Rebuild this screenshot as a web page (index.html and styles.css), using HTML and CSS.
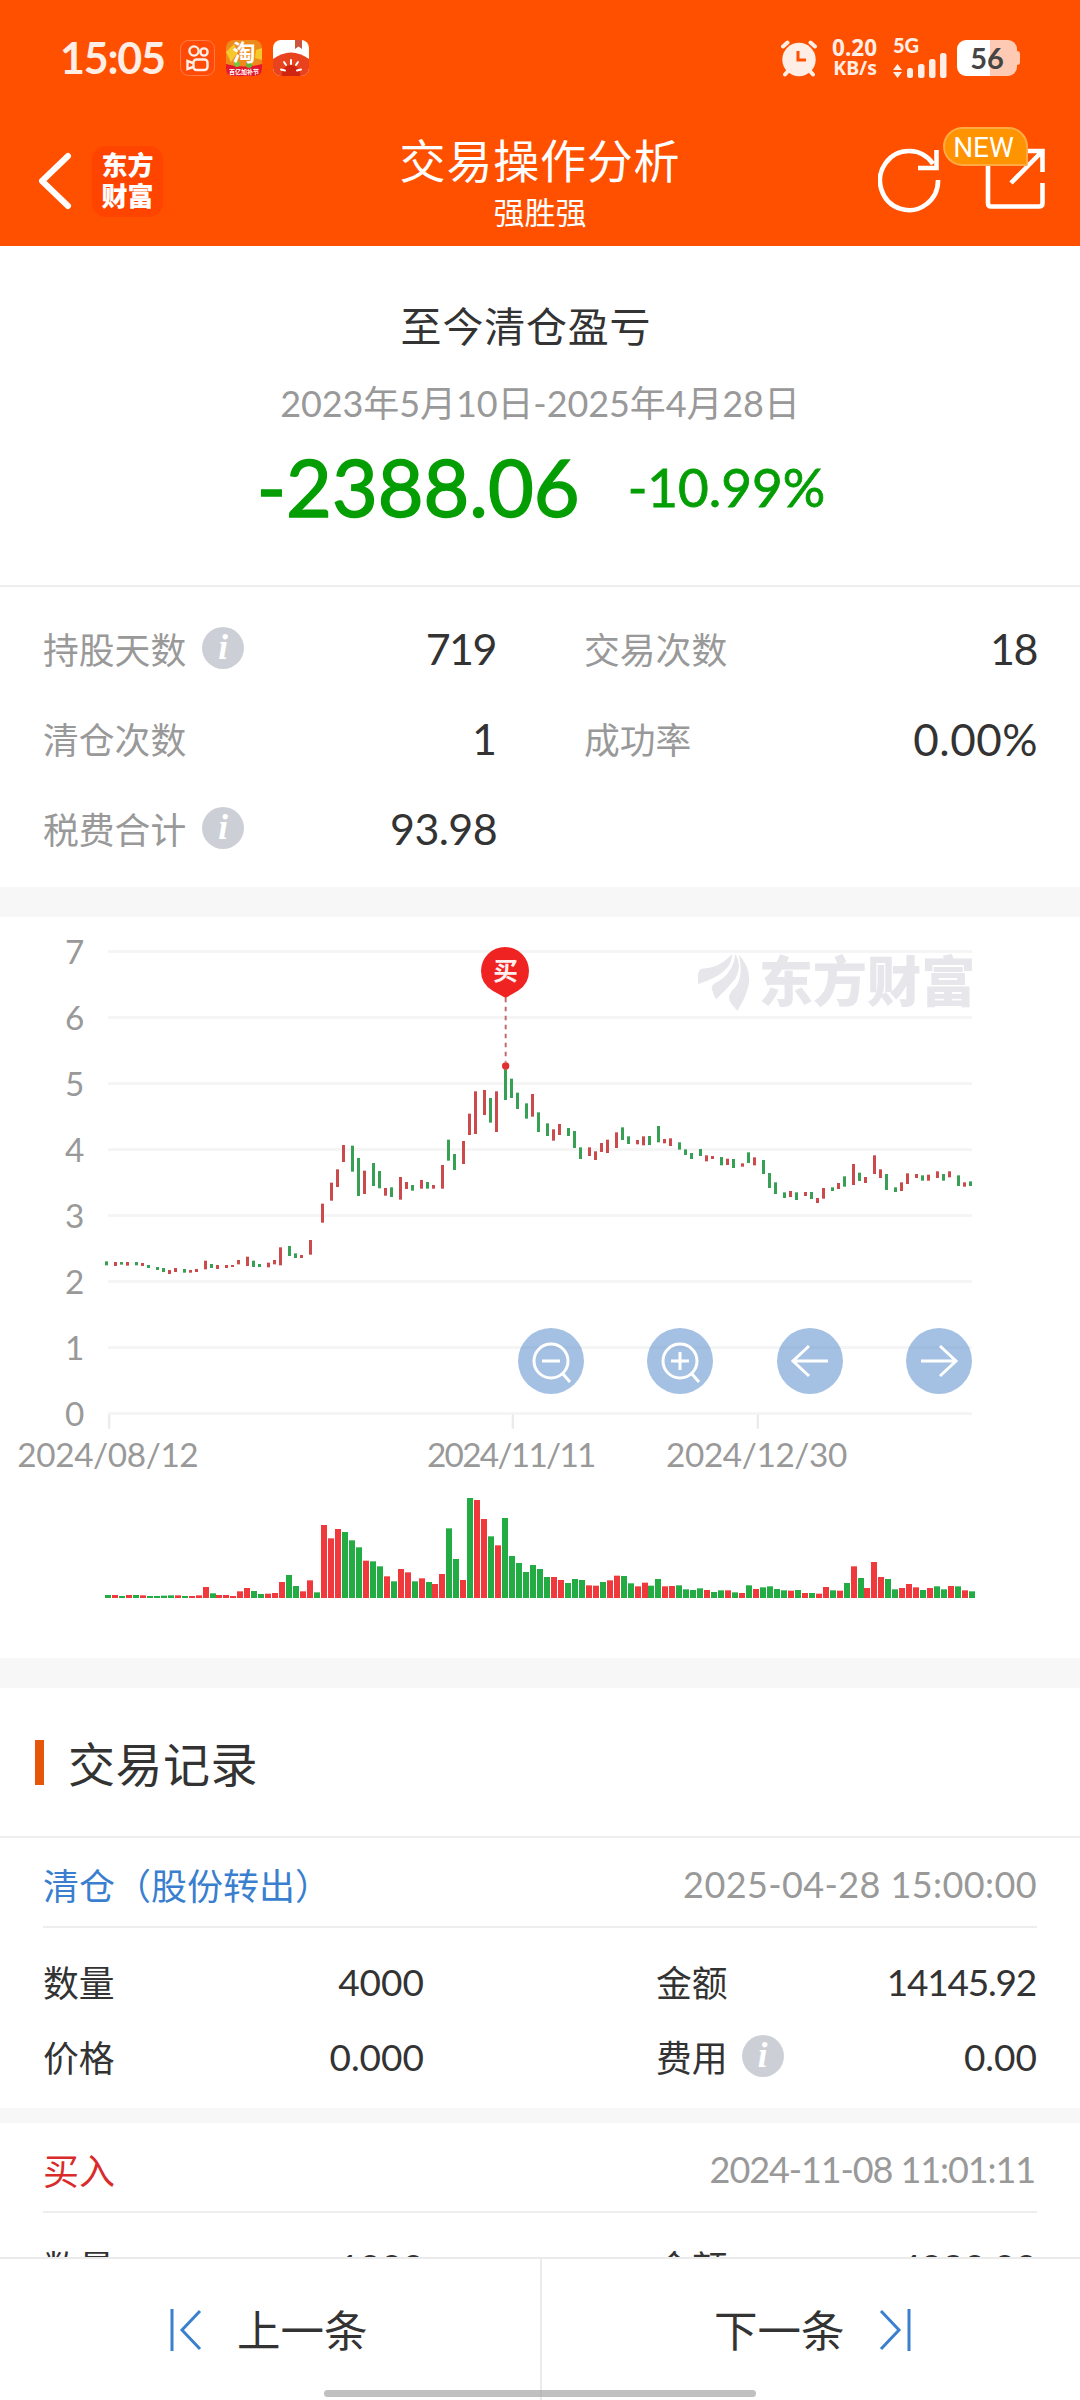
FILE: index.html
```html
<!DOCTYPE html>
<html lang="zh-CN">
<head>
    <meta charset="UTF-8">
    <title>交易操作分析</title>
    <link rel="stylesheet" href="styles.css">
</head>
<body>
    <header>
        <div class="status-bar">
            <span class="clock">15:05</span>
            <div class="app-icons">
                <svg width="35" height="36" viewBox="0 0 35 36">
                    <rect x="0.5" y="0.5" width="34" height="35" rx="8" fill="#ff4a08" stroke="#ff7a45"/>
                    <g fill="none" stroke="#ffeee6" stroke-width="2.4">
                        <circle cx="14" cy="11" r="4.6"/>
                        <circle cx="24" cy="12" r="3.6"/>
                        <rect x="13.5" y="19.5" width="14" height="10.5" rx="3"/>
                        <path d="M13 23 L7.5 21 V29 L13 27"/>
                    </g>
                </svg>
                <svg width="36" height="36" viewBox="0 0 36 36">
                    <rect width="36" height="36" rx="8" fill="#ee8a1c"/>
                    <path d="M0 12 L8 4 L12 12 L5 22 Z M30 10 L36 8 V20 L29 18 Z" fill="#f5c92b"/>
                    <path d="M0 24 Q18 29 36 24 V28 Q36 36 28 36 H8 Q0 36 0 28 Z" fill="#e4162b"/>
                    <circle cx="11" cy="24" r="3" fill="#7cc242"/>
                    <circle cx="23" cy="25" r="3" fill="#6ab53a"/>
                    <text x="18" y="21" class="tao">淘</text>
                    <text x="18" y="34" class="tao-sub">百亿加补节</text>
                </svg>
                <svg width="36" height="36" viewBox="0 0 36 36">
                    <clipPath id="tomatoClip"><rect width="36" height="36" rx="8"/></clipPath>
                    <g clip-path="url(#tomatoClip)">
                        <rect width="36" height="36" fill="#fff"/>
                        <path d="M0 19 Q18 6 36 19 V36 H0 Z" fill="#e8421f"/>
                        <circle cx="18" cy="34" r="9" fill="#cf2410"/>
                        <path d="M22 0 H29 V9 L25.5 6.5 L22 9 Z" fill="#c9563c"/>
                        <path d="M18 20 V24 M11 22 L13 25 M25 22 L23 25 M8 29.5 L12 30.5 M28 29.5 L24 30.5" stroke="#fff" stroke-width="2" stroke-linecap="round"/>
                    </g>
                </svg>
            </div>
            <div class="status-right">
                <svg class="alarm" width="38" height="38" viewBox="0 0 38 38">
                    <g stroke="#ffeee6" stroke-width="4" stroke-linecap="round" fill="none">
                        <path d="M3 7.5 L7.5 3.5 M35 7.5 L30.5 3.5 M9 31 L5 35.5 M29 31 L33 35.5"/>
                    </g>
                    <circle cx="19" cy="20.5" r="16.7" fill="#ffeee6"/>
                    <path d="M18 12 V21 H26" stroke="#ff5000" stroke-width="3" fill="none"/>
                </svg>
                <div class="net-speed"><span>0.20</span><span>KB/s</span></div>
                <div class="signal">
                    <span>5G</span>
                    <svg width="55" height="26" viewBox="0 0 55 26" fill="#ffeee6">
                        <path d="M0 18 L4.5 12 L9 18 Z M0 20 L4.5 26 L9 20 Z"/>
                        <rect x="14" y="16" width="6" height="10" rx="2.5"/>
                        <rect x="25" y="12" width="6.5" height="14" rx="2.5"/>
                        <rect x="36" y="7" width="6.5" height="19" rx="2.5"/>
                        <rect x="47" y="1" width="6.5" height="25" rx="2.5"/>
                    </svg>
                </div>
                <div class="battery">56</div>
            </div>
        </div>
        <div class="title-bar">
            <div class="title-left">
                <svg width="36" height="60" viewBox="0 0 36 60">
                    <path d="M31 5 L5 30 L31 55" fill="none" stroke="#fff" stroke-width="6" stroke-linecap="round" stroke-linejoin="round"/>
                </svg>
                <div class="brand"><span>东方</span><span>财富</span></div>
            </div>
            <div class="title-text">
                <h1>交易操作分析</h1>
                <p>强胜强</p>
            </div>
            <div class="title-right">
                <svg width="64" height="68" viewBox="0 0 64 68" fill="none" stroke="#fff" stroke-width="4.6">
                    <path d="M60 33 A29 29.500 0 1 1 55 17"/>
                    <path d="M58.500 3 V21 H40"/>
                </svg>
                <svg width="62" height="64" viewBox="0 0 62 64" fill="none" stroke="#fff" stroke-width="4.6">
                    <path d="M4 14 V56 Q4 59.500 7 59.500 H55 Q58.500 59.500 58.500 56 V36"/>
                    <path d="M42 4 H58.500 V25 M58.500 4 L27 36"/>
                </svg>
                <span class="new-badge">NEW</span>
            </div>
        </div>
    </header>

    <main>
        <section class="summary">
            <h2>至今清仓盈亏</h2>
            <p class="period">2023年5月10日-2025年4月28日</p>
            <div class="profit">
                <span class="amount">-2388.06</span>
                <span class="percent">-10.99%</span>
            </div>
        </section>

        <section class="stats">
            <div class="stat"><label>持股天数</label><i class="info">i</i><b class="tight">719</b></div>
            <div class="stat"><label>交易次数</label><b class="tight">18</b></div>
            <div class="stat"><label>清仓次数</label><b>1</b></div>
            <div class="stat"><label>成功率</label><b class="wide">0.00%</b></div>
            <div class="stat"><label>税费合计</label><i class="info">i</i><b class="decimal">93.98</b></div>
        </section>

        <section class="chart">
            <svg id="chart" width="1080" height="741" viewBox="0 21 3240 2223">
                <g id="grid"></g>
                <g fill="#e6e6eb">
                    <path d="M2094 222 V200 Q2094 178 2106 176 Q2160 174 2196 132 Q2198 190 2094 222 Z"/>
                    <path d="M2148 268 Q2140 255 2135 235 Q2136 224 2146 219 Q2200 192 2206 132 Q2228 168 2206 206 Q2178 240 2148 268 Z"/>
                    <path d="M2212 302 Q2186 276 2187 262 Q2188 248 2206 232 Q2232 196 2216 134 Q2248 166 2248 212 Q2242 256 2212 302 Z"/>
                    <text x="2276" y="276" class="watermark" textLength="650" lengthAdjust="spacingAndGlyphs">东方财富</text>
                </g>
                <g id="candles"></g>
                <g id="volumes"></g>
                <path d="M1517 263 V455" stroke="#c46a6a" stroke-width="6" stroke-dasharray="14 13"/>
                <circle cx="1517" cy="468" r="11" fill="#e0302f"/>
                <path d="M1517 264 L1478 242 Q1443 222 1443 183 A72 72 0 0 1 1587 183 Q1587 222 1554 242 Z" fill="#f02323"/>
                <text x="1517" y="210" class="pin-text">买</text>
            </svg>
            <div class="chart-tools">
                <button><svg viewBox="0 0 66 66"><circle cx="33" cy="33" r="17"/><path d="M24 33 H42 M45 46 L52 54"/></svg></button>
                <button><svg viewBox="0 0 66 66"><circle cx="33" cy="33" r="17"/><path d="M24 33 H42 M33 24 V42 M45 46 L52 54"/></svg></button>
                <button><svg viewBox="0 0 66 66"><path d="M51 33 H16 M32 18 L16 33 L32 48"/></svg></button>
                <button><svg viewBox="0 0 66 66"><path d="M15 33 H50 M34 18 L50 33 L34 48"/></svg></button>
            </div>
        </section>

        <section class="records">
            <h3>交易记录</h3>
            <div class="record">
                <div class="record-head"><span class="sell">清仓（股份转出）</span><time>2025-04-28 15:00:00</time></div>
                <div class="record-body">
                    <div class="cell"><label>数量</label><b>4000</b></div>
                    <div class="cell"><label>金额</label><b class="tight">14145.92</b></div>
                    <div class="cell"><label>价格</label><b>0.000</b></div>
                    <div class="cell"><label>费用</label><i class="info">i</i><b>0.00</b></div>
                </div>
            </div>
            <div class="record">
                <div class="record-head"><span class="buy">买入</span><time class="time-narrow">2024-11-08 11:01:11</time></div>
                <div class="record-body">
                    <div class="cell"><label>数量</label><b>1000</b></div>
                    <div class="cell"><label>金额</label><b>4980.00</b></div>
                </div>
            </div>
        </section>
    </main>

    <footer>
        <a class="prev">
            <svg width="32" height="44" viewBox="0 0 32 44"><path d="M2 1 V43 M30 3 L12 22 L30 41"/></svg>
            <span>上一条</span>
        </a>
        <a class="next">
            <span>下一条</span>
            <svg width="32" height="44" viewBox="0 0 32 44"><path d="M30 1 V43 M2 3 L20 22 L2 41"/></svg>
        </a>
        <div class="home-indicator"></div>
    </footer>

    <script src="chart.js"></script>
</body>
</html>
```
FILE: styles.css
```css
* {
    box-sizing: border-box;
    margin: 0;
    padding: 0;
}
body {
    width: 1080px;
    height: 2400px;
    overflow: hidden;
    display: flex;
    flex-direction: column;
    background: #fff;
    color: #333;
    font-family: Lato, "Noto Sans CJK SC", sans-serif;
}
svg {
    display: block;
    flex: none;
}
header {
    flex: none;
    height: 246px;
    background: #ff5000;
    color: #fff;
}

/* status bar */
.status-bar {
    height: 116px;
    padding: 0 60px;
    display: flex;
    align-items: center;
    color: #ffeee6;
}
.clock {
    width: 120px;
    padding-bottom: 2px;
    font-size: 43px;
    font-weight: 700;
    letter-spacing: -1.2px;
}
.app-icons {
    display: flex;
    gap: 11px;
}
.app-icons svg {
    overflow: visible;
}
.tao {
    font-size: 23px;
    font-weight: 700;
    fill: #fff;
    text-anchor: middle;
}
.tao-sub {
    font-size: 6px;
    font-weight: 700;
    fill: #fff;
    text-anchor: middle;
}
.status-right {
    margin-left: auto;
    display: flex;
    align-items: center;
}
.alarm {
    margin-right: 11px;
}
.net-speed {
    width: 48px;
    margin-right: 16px;
    padding-bottom: 1px;
    font-family: "Noto Sans", sans-serif;
    font-size: 19.5px;
    font-weight: 700;
    line-height: 20px;
    text-align: right;
    white-space: nowrap;
}
.net-speed span {
    display: block;
}
.net-speed span:first-child {
    font-size: 22.5px;
}
.signal {
    width: 64px;
    font-size: 20px;
    font-weight: 900;
    line-height: 13px;
}
.signal span {
    display: block;
    padding-top: 1px;
}
.battery {
    position: relative;
    width: 60px;
    height: 36px;
    margin-right: 3px;
    border-radius: 9px;
    background: linear-gradient(90deg, #fff 33px, #ffcab3 33px);
    color: #444;
    font-size: 29px;
    font-weight: 700;
    line-height: 36px;
    text-align: center;
}
.battery::after {
    content: "";
    position: absolute;
    right: -3px;
    top: 11px;
    width: 3px;
    height: 14px;
    border-radius: 0 3px 3px 0;
    background: #ffcab3;
}

/* title bar */
.title-bar {
    height: 130px;
    display: grid;
    grid-template-columns: 1fr 400px 1fr;
}
.title-left {
    display: flex;
    align-items: center;
    padding-left: 37px;
    gap: 19px;
}
.brand {
    width: 71px;
    height: 71px;
    padding-top: 4px;
    border-radius: 14px;
    background: #ff4400;
    font-size: 26px;
    font-weight: 900;
    line-height: 31px;
    text-align: center;
}
.brand span {
    display: block;
}
.title-text {
    text-align: center;
    padding-top: 17px;
}
.title-text h1 {
    font-size: 46px;
    font-weight: 400;
    line-height: 56px;
    letter-spacing: 0.8px;
}
.title-text p {
    font-size: 31px;
    line-height: 46px;
}
.title-right {
    position: relative;
    display: flex;
    justify-content: flex-end;
    gap: 42px;
    padding: 31px 34px 0 0;
}
.new-badge {
    position: absolute;
    left: 203px;
    top: 11px;
    width: 85px;
    height: 39px;
    padding-right: 4px;
    border: 2px solid #ffab45;
    border-radius: 20px 20px 2px 20px;
    background: #ff9300;
    font-family: Roboto, sans-serif;
    font-size: 28px;
    line-height: 37px;
    text-align: center;
}

main {
    flex: 1;
    min-height: 0;
    overflow: hidden;
}

/* profit summary */
.summary {
    height: 341px;
    padding-top: 51px;
    border-bottom: 2px solid #eee;
    text-align: center;
}
.summary h2 {
    padding-right: 28px;
    font-size: 41px;
    font-weight: 400;
    line-height: 60px;
    letter-spacing: 0.8px;
}
.period {
    margin-top: 20px;
    font-size: 36px;
    line-height: 52px;
    letter-spacing: -0.1px;
    color: #999;
}
.profit {
    margin-top: 18px;
    padding-left: 2px;
    display: flex;
    justify-content: center;
    align-items: center;
    gap: 48px;
    color: #049e04;
    line-height: 80px;
}
.amount {
    font-size: 79px;
    -webkit-text-stroke: 1.5px #049e04;
}
.percent {
    font-size: 53px;
    -webkit-text-stroke: 0.8px #049e04;
}

/* statistics */
.stats {
    height: 330px;
    padding: 16px 43px 0;
    border-bottom: 30px solid #f7f7f7;
    display: grid;
    grid-template-columns: 454px 454px;
    grid-auto-rows: 90px;
    column-gap: 87px;
}
.stat, .cell {
    display: flex;
    align-items: center;
}
.stat label {
    font-size: 35.8px;
    color: #999;
}
.stat b {
    margin-left: auto;
    padding-top: 1px;
    font-size: 43px;
    font-weight: 400;
}
.stat .tight {
    letter-spacing: -1.5px;
    margin-right: 1px;
}
.stat .wide {
    font-size: 44px;
    letter-spacing: 0.5px;
}
.stat .decimal {
    letter-spacing: -0.6px;
}
.info {
    width: 42px;
    height: 42px;
    margin-left: 16px;
    border-radius: 50%;
    background: #ccd0d6;
    color: #fff;
    font: italic bold 35px/42px "Liberation Serif", serif;
    text-align: center;
}

/* chart */
.chart {
    position: relative;
    height: 771px;
    border-bottom: 30px solid #f7f7f7;
}
.axis {
    font-size: 100px;
    fill: #999;
}
.watermark {
    font-size: 162px;
    font-weight: 900;
}
.pin-text {
    font-size: 74px;
    font-weight: 700;
    fill: #fff0f0;
    text-anchor: middle;
}
.chart-tools {
    position: absolute;
    left: 518px;
    top: 411px;
    display: flex;
    gap: 63.3px;
}
.chart-tools button {
    width: 66px;
    height: 66px;
    border: none;
    border-radius: 50%;
    background: rgba(73, 132, 200, 0.5);
}
.chart-tools svg {
    width: 66px;
    height: 66px;
    fill: none;
    stroke: #fff;
    stroke-width: 3px;
}

/* trade records */
.records h3 {
    height: 150px;
    display: flex;
    align-items: center;
    padding-bottom: 2px;
    border-bottom: 2px solid #eee;
    font-size: 47px;
    font-weight: 400;
    letter-spacing: 0.5px;
}
.records h3::before {
    content: "";
    width: 9px;
    height: 45px;
    margin: 2px 24px 0 35px;
    background: #e6560a;
}
.record {
    padding: 0 43px;
    height: 285px;
    border-bottom: 15px solid #f7f7f7;
}
.record-head {
    height: 90px;
    padding-top: 3px;
    display: flex;
    align-items: center;
    justify-content: space-between;
    border-bottom: 2px solid #eee;
    font-size: 36px;
}
.sell {
    color: #3a7fcf;
}
.buy {
    color: #d92b2b;
}
.record-head time {
    color: #999;
    letter-spacing: 0.4px;
}
.record-head .time-narrow {
    margin-right: 2px;
    letter-spacing: -1.1px;
}
.record-body {
    padding-top: 15px;
    display: grid;
    grid-template-columns: 381px 381px;
    grid-auto-rows: 75px;
    column-gap: 232px;
    font-size: 35.8px;
}
.cell b {
    margin-left: auto;
    padding-top: 1px;
    font-weight: 400;
    font-size: 37px;
}
.cell .tight {
    letter-spacing: -1.2px;
    margin-right: 1px;
}
.cell .info {
    margin-left: 14px;
}

/* bottom navigation */
footer {
    position: relative;
    flex: none;
    height: 143px;
    display: grid;
    grid-template-columns: 542px 538px;
    border-top: 2px solid #ebebeb;
    background: #fff;
}
footer a {
    display: flex;
    align-items: center;
    font-size: 43.5px;
}
footer a span {
    padding-bottom: 3px;
}
.prev {
    padding-left: 170px;
    gap: 35px;
    border-right: 2px solid #ebebeb;
}
.next {
    padding-left: 172px;
    gap: 34px;
}
footer svg {
    fill: none;
    stroke: #3a80cf;
    stroke-width: 3px;
}
.home-indicator {
    position: absolute;
    left: 324px;
    bottom: 3px;
    width: 432px;
    height: 7px;
    border-radius: 4px;
    background: rgba(150, 150, 150, 0.6);
}
```
FILE: chart.js
```js
// one entry per day: colour, top, bottom (null = single price all day)
const candles = `g1054,1066 r1056,1068 g1056,1064 r1056,1067 g1056,1066 r1059,1068 g1065,1074 g1071,1080 g1074,1086 r1080,1092
r1074,1086 g1077,1088 r1080,1088 r1077,1086 r1052,1078 g1062,1074 r1065,1077 r1065,1074 r1065,1071 r1050,1063
r1040,1068 g1052,1071 g1062,1071 r1058,1072 r1050,1063 r1012,1066 g1008,1038 g1030,1044 r1035,1044 r990,1034
null r881,938 r818,872 r778,831 r705,756 g707,785 g744,858 r782,852 g759,828 g783,835
r834,857 g832,861 r801,869 r816,837 g825,842 r810,836 g816,836 r825,836 r765,836 g689,752
g732,780 r693,762 r611,675 r544,672 r540,615 g564,638 r544,666 g478,570 g506,564 g548,597
g580,626 r552,620 g607,666 g640,678 r658,692 r642,675 g654,678 g663,714 g712,747 r712,738
r724,750 r699,726 r689,729 r667,714 g652,690 g679,702 r690,703 r679,706 g678,705 g648,697
r687,700 r685,708 g697,719 g718,735 g729,747 g717,738 r736,754 r738,747 g741,766 r746,765
g747,774 r760,770 g727,759 r742,766 g750,792 g789,834 g817,852 g847,864 r843,861 g847,870
r846,858 g846,867 r864,879 r834,866 g832,843 r819,837 g799,830 r762,825 g788,813 r801,819
r736,792 r778,804 g792,840 g832,846 r817,843 r790,822 r792,804 g796,812 r794,812 r784,804
g792,812 r784,802 g796,828 r817,830 g814,828`.split(/\s+/);

const volumes = `g9 r9 g6 r9 g9 r8 g6 g6 g7 g8 r8 g6 r6 r8 r33 g14 r9 r9 r6 r20 r30 g21 g12 r13 r15
r48 g69 g36 r20 r53 g17 r219 r179 r207 g198 g173 g152 r112 g110 g95 r65 g50 r87 r77 g50 r59 g48 r42 r72 g209
g117 r54 g300 r294 r237 g185 r158 g240 g126 g105 g78 g99 g87 g63 r63 r54 g45 g57 g54 r38 r37 g48 r53 r67 g66
g44 r35 r46 g37 g57 r35 r36 g38 g26 g24 g29 r24 g18 g23 r23 g17 r15 g38 r27 g32 g35 g27 g23 r22 g24
r15 g15 r13 r33 g23 r22 g45 r95 g60 r30 r108 r63 g57 g26 r30 r42 r32 g24 r30 g35 g26 r36 g35 r23 g20`.split(/\s+/);

const step = 864 / 124;

let grid = '';
for (let i = 0; i <= 7; i++) {
    const y = 124 + i * 198;
    grid += `<rect x="324" y="${y - 4}" width="2592" height="9" fill="#f5f5f5"/>`;
    grid += `<text class="axis" x="253" y="${y + 38}" text-anchor="end">${7 - i}</text>`;
}
[[327, '2024/08/12', 544], [1538, '2024/11/11', 508], [2273, '2024/12/30', 544]].forEach(([x, label, width]) => {
    grid += `<rect x="${x - 3}" y="1514" width="7" height="42" fill="#ebebeb"/>`;
    grid += `<text class="axis" x="${x - 3}" y="1671" text-anchor="middle" textLength="${width}">${label}</text>`;
});
document.getElementById('grid').innerHTML = grid;

document.getElementById('candles').innerHTML = candles.map((c, i) => {
    if (c === 'null') return '';
    const [top, bottom] = c.slice(1).split(',').map(Number);
    const x = 315 + Math.floor(i * step / 3 + 0.75) * 9;
    return `<rect x="${x}" y="${top}" width="9" height="${bottom - top}" fill="${c[0] === 'r' ? '#cb4a4c' : '#38a055'}"/>`;
}).join('');

document.getElementById('volumes').innerHTML = volumes.map((v, i) => {
    const h = Number(v.slice(1));
    const x = 315 + Math.round(i * step) * 3;
    return `<rect x="${x}" y="${2064 - h}" width="18" height="${h}" fill="${v[0] === 'r' ? '#ef393c' : '#22ac43'}"/>`;
}).join('');
```
